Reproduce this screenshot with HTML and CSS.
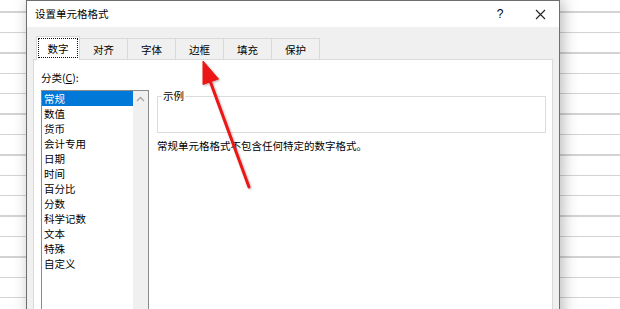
FILE: index.html
```html
<!DOCTYPE html>
<html lang="zh-CN">
<head>
    <meta charset="UTF-8">
    <meta name="viewport" content="width=device-width, initial-scale=1.0">
    <title>设置单元格格式</title>
    <link rel="stylesheet" href="styles.css">
</head>
<body>
    <div class="sheet">
        <div class="dialog">
            <div class="titlebar">
                <span class="title">设置单元格格式</span>
                <span class="title-btn help">?</span>
                <span class="title-btn close">
                    <svg width="11" height="11" viewBox="0 0 11 11"><path d="M1 1L10 10M10 1L1 10" stroke="#222" stroke-width="1.1" fill="none"/></svg>
                </span>
            </div>
            <div class="dialog-body">
                <ul class="tabs">
                    <li class="tab active">数字</li>
                    <li class="tab">对齐</li>
                    <li class="tab">字体</li>
                    <li class="tab">边框</li>
                    <li class="tab">填充</li>
                    <li class="tab">保护</li>
                </ul>
                <div class="panel">
                    <div class="category">
                        <div class="label">分类(<u>C</u>):</div>
                        <div class="listbox">
                            <ul class="items">
                                <li class="item selected">常规</li>
                                <li class="item">数值</li>
                                <li class="item">货币</li>
                                <li class="item">会计专用</li>
                                <li class="item">日期</li>
                                <li class="item">时间</li>
                                <li class="item">百分比</li>
                                <li class="item">分数</li>
                                <li class="item">科学记数</li>
                                <li class="item">文本</li>
                                <li class="item">特殊</li>
                                <li class="item">自定义</li>
                            </ul>
                            <div class="scrollbar">
                                <div class="scroll-btn">
                                    <svg width="9" height="6" viewBox="0 0 9 6"><path d="M1 5L4.5 1.5L8 5" stroke="#a6a6a6" stroke-width="1.3" fill="none"/></svg>
                                </div>
                            </div>
                        </div>
                    </div>
                    <div class="detail">
                        <fieldset class="sample">
                            <legend>示例</legend>
                            <div class="sample-value"></div>
                        </fieldset>
                        <p class="desc">常规单元格格式不包含任何特定的数字格式。</p>
                    </div>
                </div>
            </div>
        </div>

        <!-- annotation arrow drawn over the dialog -->
        <svg class="arrow" width="620" height="309" viewBox="0 0 620 309">
            <defs>
                <filter id="soft" x="-20%" y="-20%" width="140%" height="140%">
                    <feDropShadow dx="1" dy="1" stdDeviation="1" flood-color="#000" flood-opacity="0.3"/>
                </filter>
            </defs>
            <g filter="url(#soft)" fill="#ec1515" stroke="#ec1515">
                <line x1="249" y1="187" x2="209" y2="78" stroke-width="3" stroke-linecap="round"/>
                <polygon points="203,61 218.5,79 203,84.5" stroke-width="1" stroke-linejoin="round"/>
            </g>
        </svg>
    </div>
</body>
</html>
```

FILE: styles.css
```css
html, body {
    margin: 0;
    padding: 0;
}
body {
    font-family: "Noto Sans CJK SC", "Microsoft YaHei", sans-serif;
    font-size: 10.5px;
    color: #000;
}
.sheet {
    position: relative;
    display: flex;
    height: 309px;
    padding-left: 26px;
    overflow: hidden;
    background: repeating-linear-gradient(to bottom, #fff 0, #fff 11.5px, #d3d3d3 11.5px, #d3d3d3 12.8px, #fff 12.8px, #fff 20.4px);
}
.dialog {
    display: flex;
    flex-direction: column;
    width: 534px;
    height: 330px;
    box-sizing: border-box;
    border: 1px solid #6e6e6e;
    border-bottom: none;
    background: #f0f0f0;
    box-shadow: 3px 0 14px rgba(0, 0, 0, 0.28);
}
.titlebar {
    display: flex;
    align-items: center;
    height: 26px;
    padding: 0 4px 0 8px;
    background: #fff;
}
.titlebar .title {
    flex: 1;
    line-height: 14px;
}
.title-btn {
    display: flex;
    justify-content: center;
    align-items: center;
    width: 30px;
    height: 26px;
}
.help {
    margin-right: 10px;
    font-family: "Liberation Sans", sans-serif;
    font-size: 12px;
}
.dialog-body {
    flex: 1;
    padding: 9px 6px 0 6px;
}
.tabs {
    display: flex;
    align-items: flex-end;
    height: 23px;
    margin: 0;
    padding: 0 0 0 3px;
    list-style: none;
}
.tab {
    position: relative;
    display: flex;
    justify-content: center;
    align-items: center;
    width: 49px;
    height: 21px;
    box-sizing: border-box;
    margin-right: -1px;
    border: 1px solid #d9d9d9;
    border-bottom: none;
    background: #f0f0f0;
    line-height: 14px;
    padding-top: 1px;
}
.tab.active {
    z-index: 1;
    width: 44px;
    height: 24px;
    margin-bottom: -1px;
    background: #fff;
    padding-top: 0;
}
.tab.active::after {
    content: "";
    position: absolute;
    top: 1px;
    left: 1px;
    right: 1px;
    bottom: 2px;
    border: 1px dotted #111;
}
.panel {
    display: flex;
    height: 260px;
    padding: 11px 6px 0 7px;
    border: 1px solid #d9d9d9;
    background: #fff;
}
.category {
    width: 108px;
}
.label {
    line-height: 14px;
}
.listbox {
    display: flex;
    height: 230px;
    margin-top: 5px;
    border: 1px solid #8a8a8a;
}
.items {
    flex: 1;
    margin: 0;
    padding: 0;
    list-style: none;
}
.item {
    height: 15px;
    padding-left: 2px;
    line-height: 15px;
}
.item.selected {
    background: #0078d7;
    color: #fff;
}
.scrollbar {
    width: 15px;
    background: #f0f0f0;
}
.scroll-btn {
    display: flex;
    justify-content: center;
    align-items: center;
    height: 16px;
}
.detail {
    flex: 1;
    margin-left: 8px;
}
.sample {
    min-width: 0;
    margin: 18px 0 0;
    padding: 0 4px;
    border: 1px solid #dcdcdc;
}
.sample legend {
    padding: 0 1px;
    line-height: 14px;
}
.sample-value {
    height: 29px;
}
.desc {
    margin: 6px 0 0;
    line-height: 14px;
}
.arrow {
    position: absolute;
    top: 0;
    left: 0;
    pointer-events: none;
}
```
